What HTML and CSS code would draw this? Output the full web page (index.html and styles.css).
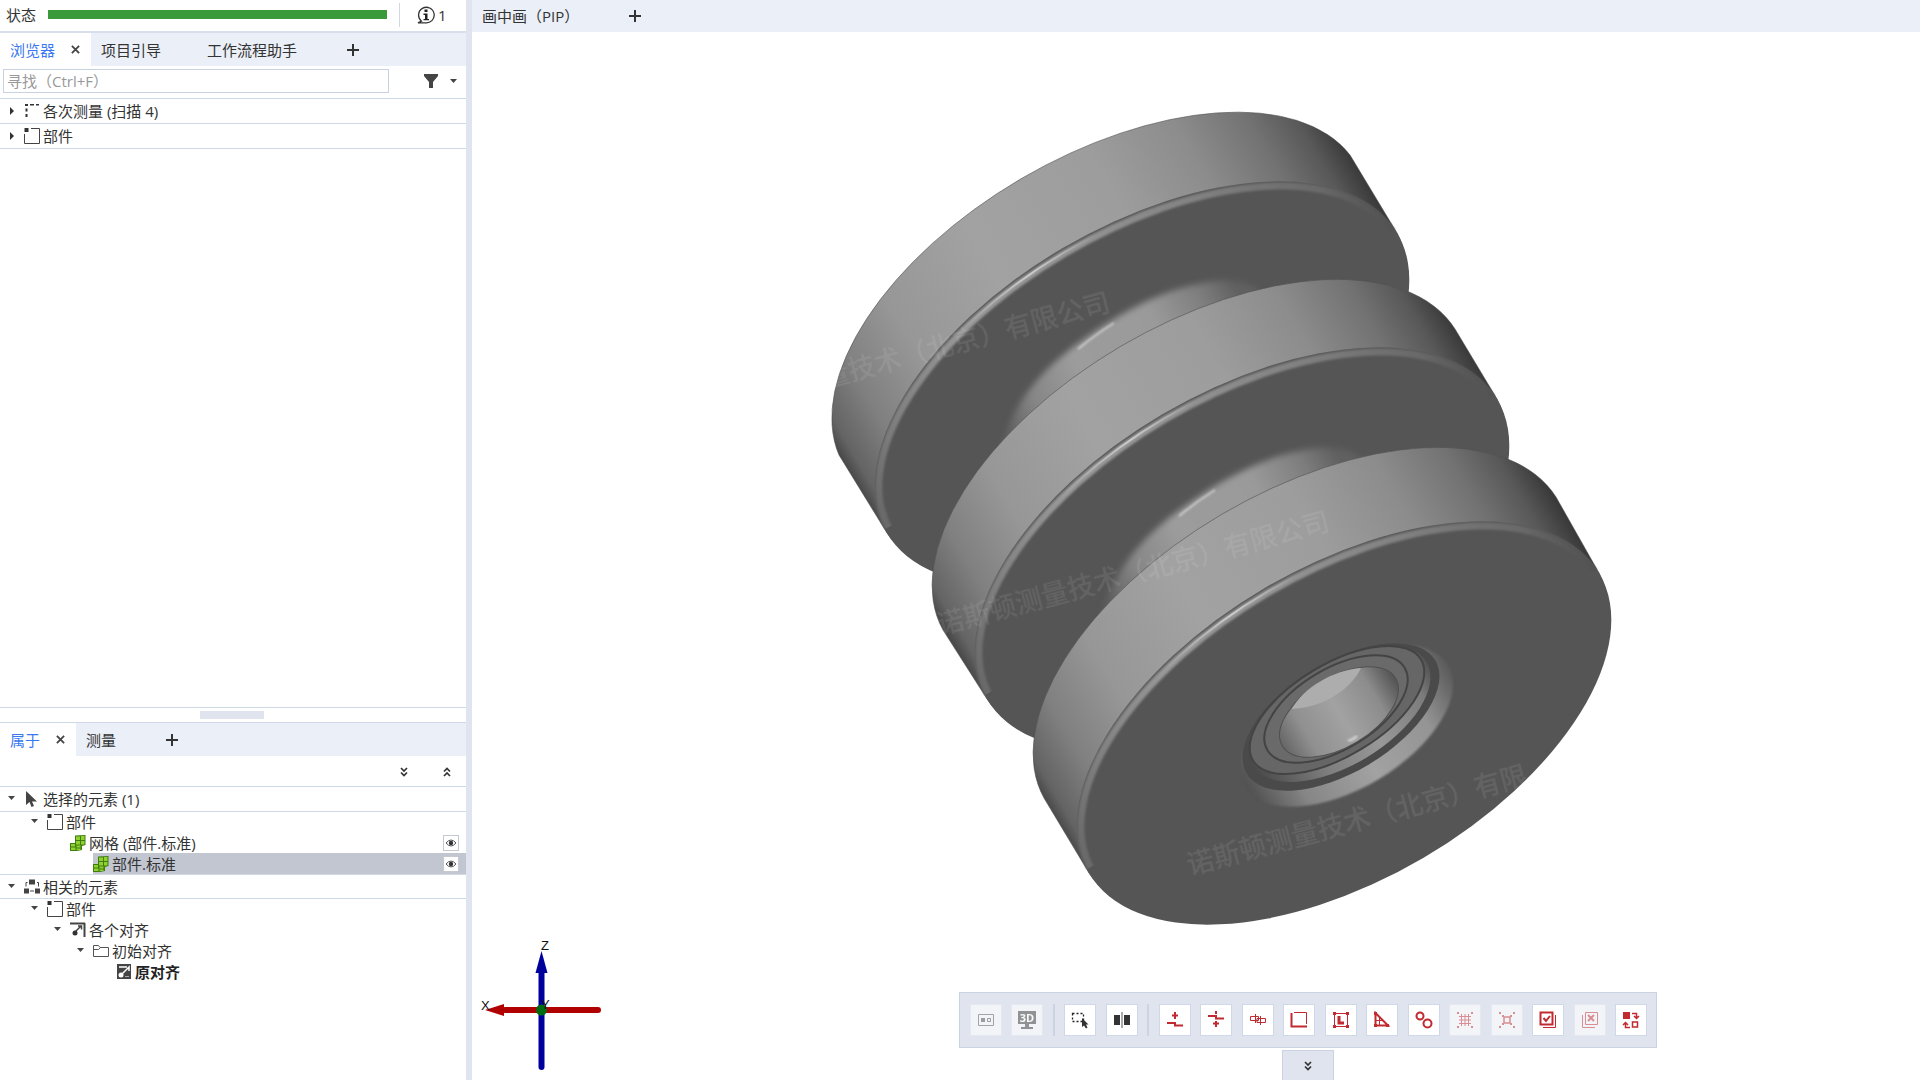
FILE: index.html
```html
<!DOCTYPE html>
<html lang="zh-CN">
<head>
<meta charset="utf-8">
<title>画中画（PIP）</title>
<link rel="stylesheet" href="styles.css">
</head>
<body>
<svg class="sprite" aria-hidden="true">
  <symbol id="i-plus" viewBox="0 0 12 12"><path d="M6 0v12M0 6h12" fill="none" stroke="#333" stroke-width="2"/></symbol>
  <symbol id="i-close" viewBox="0 0 10 10"><path d="M1 1l8 8M9 1l-8 8" fill="none" stroke="#444" stroke-width="2"/></symbol>
  <symbol id="i-right" viewBox="0 0 8 8"><path d="M2 0l4 4-4 4z" fill="#333"/></symbol>
  <symbol id="i-down" viewBox="0 0 8 8"><path d="M0 1h7L3.500 5z" fill="#444"/></symbol>
  <symbol id="i-dbl-down" viewBox="0 0 8 10"><path d="M1 1l3 3 3-3M1 5.500l3 3 3-3" fill="none" stroke="#333" stroke-width="1.700"/></symbol>
  <symbol id="i-dbl-up" viewBox="0 0 8 10"><path d="M1 4.500l3-3 3 3M1 9l3-3 3 3" fill="none" stroke="#333" stroke-width="1.700"/></symbol>
  <symbol id="i-part" viewBox="0 0 16 16"><path d="M7 .5h8.500v15H.5V6" fill="none" stroke="#444"/><path d="M.5 0h4v4h-4z" fill="#333"/></symbol>
  <symbol id="i-series" viewBox="0 0 16 16"><path d="M1 1h3v2H1zM6 1h4v1.500H6zM12 1h3v1.500h-3zM1.500 5.500h2v3h-2zM1.500 11h2v3h-2z" fill="#333"/></symbol>
  <symbol id="i-cursor" viewBox="0 0 16 16"><path d="M2 0v14l3.500-3 2 5 2.500-1-2-4.500H13z" fill="#444"/></symbol>
  <symbol id="i-mesh" viewBox="0 0 16 16"><path d="M5 .5L15.500 0v10L12 11v4l-5 1H0V8h5z" fill="#3f7d0c"/><path d="M6 1.500h4v3.500H6zM11 1h3.500v4H11zM6 6h4v3.500H6zM11 6h3.500v3.500H11zM1 9h4v2.500H1zM6.500 10.500h4v2h-4zM1 12.500h4.500V15H1zM6.500 13.500h4V15h-4z" fill="#8fd130"/></symbol>
  <symbol id="i-related" viewBox="1 1 16 15"><path d="M6 1h6v5H6zM1 10h5v5H1zM12 10h5v5h-5z" fill="#444"/><path d="M3 8V4h1.500M15.500 8V4H14M7 12.500h4" fill="none" stroke="#444"/></symbol>
  <symbol id="i-aligns" viewBox="0 0 16 16"><path d="M0 1.500h15M14.500 1v14" stroke="#444" stroke-width="2"/><path d="M5 10l6-6M8 4h3.500v3.500" fill="none" stroke="#444" stroke-width="1.500"/><circle cx="5" cy="11" r="2.500" fill="#333"/></symbol>
  <symbol id="i-folder" viewBox="0 0 16 16"><path d="M.5 13.500v-11h5l1.500 2h8.500v9zM.5 6.500h5l2-2" fill="none" stroke="#555"/></symbol>
  <symbol id="i-origin" viewBox="0 0 16 16"><path d="M1 0h14v15H1z" fill="#444"/><path d="M3 3h8M6 10l7-7v4" fill="none" stroke="#fff" stroke-width="1.500"/><circle cx="5" cy="11" r="2.500" fill="#fff"/><path d="M9 12.500h4" stroke="#aaa"/></symbol>
  <symbol id="i-eye" viewBox="0 0 16 16"><path d="M3 8q5-6 10 0-5 6-10 0z" fill="#fff" stroke="#555"/><circle cx="8" cy="8" r="2.200" fill="#333"/></symbol>
</svg>

<div class="app">
  <aside class="side">
    <div class="status">
      <label for="progress">状态</label>
      <progress id="progress" value="1" max="1"></progress>
      <button class="info" type="button">
        <svg width="18" height="18" viewBox="0 0 18 18"><path d="M4.500 15.200A7.800 7.800 0 1 1 8 16.800H1z" fill="none" stroke="#333" stroke-width="1.300"/><path d="M7.500 3.500h3v2.500h-3zM6.500 7.500h4V13H12v1.300H6.500V13H8V9H6.500z" fill="#222"/></svg>
        <span>1</span>
      </button>
    </div>

    <div class="tabs">
      <div class="tab active"><button type="button">浏览器</button><button class="close" type="button" aria-label="关闭"><svg width="9" height="9"><use href="#i-close"/></svg></button></div>
      <div class="tab"><button type="button">项目引导</button></div>
      <div class="tab"><button type="button">工作流程助手</button></div>
      <button class="add" type="button" aria-label="添加"><svg width="12" height="12"><use href="#i-plus"/></svg></button>
    </div>

    <div class="search">
      <input type="text" placeholder="寻找（Ctrl+F）" aria-label="寻找">
      <button type="button" aria-label="过滤"><svg width="34" height="16" viewBox="0 0 34 16"><path d="M0 1h14v2L9 9v6H5V9L0 3z" fill="#444"/><path d="M26 6h7l-3.500 4z" fill="#444"/></svg></button>
    </div>

    <ul class="tree browser">
      <li class="row head"><svg class="caret"><use href="#i-right"/></svg><span class="node"><svg class="icon"><use href="#i-series"/></svg>各次测量 (扫描 4)</span></li>
      <li class="row head"><svg class="caret"><use href="#i-right"/></svg><span class="node"><svg class="icon"><use href="#i-part"/></svg>部件</span></li>
    </ul>

    <div class="splitter"><span></span></div>

    <div class="tabs">
      <div class="tab active"><button type="button">属于</button><button class="close" type="button" aria-label="关闭"><svg width="9" height="9"><use href="#i-close"/></svg></button></div>
      <div class="tab"><button type="button">测量</button></div>
      <button class="add" type="button" aria-label="添加"><svg width="12" height="12"><use href="#i-plus"/></svg></button>
    </div>
    <div class="fold">
      <button type="button" aria-label="展开"><svg width="8" height="10"><use href="#i-dbl-down"/></svg></button>
      <button type="button" aria-label="折叠"><svg width="8" height="10"><use href="#i-dbl-up"/></svg></button>
    </div>

    <ul class="tree details">
      <li class="row head"><svg class="caret"><use href="#i-down"/></svg><span class="node"><svg class="icon"><use href="#i-cursor"/></svg>选择的元素 (1)</span></li>
      <li class="row l1"><svg class="caret"><use href="#i-down"/></svg><span class="node"><svg class="icon"><use href="#i-part"/></svg>部件</span></li>
      <li class="row l2"><span class="caret"></span><span class="node"><svg class="icon"><use href="#i-mesh"/></svg>网格 (部件.标准)<button class="eye" type="button" aria-label="可见"><svg width="16" height="16"><use href="#i-eye"/></svg></button></span></li>
      <li class="row l3"><span class="caret"></span><span class="node selected"><svg class="icon"><use href="#i-mesh"/></svg>部件.标准<button class="eye" type="button" aria-label="可见"><svg width="16" height="16"><use href="#i-eye"/></svg></button></span></li>
      <li class="row head ruled"><svg class="caret"><use href="#i-down"/></svg><span class="node"><svg class="icon"><use href="#i-related"/></svg>相关的元素</span></li>
      <li class="row l1"><svg class="caret"><use href="#i-down"/></svg><span class="node"><svg class="icon"><use href="#i-part"/></svg>部件</span></li>
      <li class="row l2"><svg class="caret"><use href="#i-down"/></svg><span class="node"><svg class="icon"><use href="#i-aligns"/></svg>各个对齐</span></li>
      <li class="row l3"><svg class="caret"><use href="#i-down"/></svg><span class="node"><svg class="icon"><use href="#i-folder"/></svg>初始对齐</span></li>
      <li class="row l4"><span class="caret"></span><span class="node bold"><svg class="icon"><use href="#i-origin"/></svg>原对齐</span></li>
    </ul>
  </aside>

  <main class="view">
    <div class="tabs viewtabs">
      <div class="tab"><button type="button">画中画（PIP）</button></div>
      <button class="add" type="button" aria-label="添加"><svg width="12" height="12"><use href="#i-plus"/></svg></button>
    </div>
    <div class="canvas">
      <svg class="scene" viewBox="472 32 1448 1048">
        <defs>
          <linearGradient id="side" gradientUnits="userSpaceOnUse" x1="-256" y1="150" x2="256" y2="-150">
            <stop offset="0" stop-color="#4a4a4a"/><stop offset=".02" stop-color="#646464"/><stop offset=".09" stop-color="#808080"/><stop offset=".2" stop-color="#979797"/><stop offset=".38" stop-color="#a2a2a2"/><stop offset=".62" stop-color="#9d9d9d"/><stop offset=".77" stop-color="#8c8c8c"/><stop offset=".88" stop-color="#727272"/><stop offset=".95" stop-color="#585858"/><stop offset="1" stop-color="#383838"/>
          </linearGradient>
          <linearGradient id="rim" gradientUnits="userSpaceOnUse" x1="-297" y1="0" x2="297" y2="0">
            <stop offset="0" stop-color="#686868"/><stop offset=".1" stop-color="#7e7e7e"/><stop offset=".3" stop-color="#9a9a9a"/><stop offset=".5" stop-color="#969696"/><stop offset=".75" stop-color="#808080"/><stop offset=".92" stop-color="#6a6a6a"/><stop offset="1" stop-color="#505050"/>
          </linearGradient>
          <linearGradient id="shine" gradientUnits="userSpaceOnUse" x1="-297" y1="0" x2="297" y2="0">
            <stop offset=".28" stop-color="#fff" stop-opacity="0"/><stop offset=".43" stop-color="#fff" stop-opacity=".5"/><stop offset=".56" stop-color="#fff" stop-opacity="0"/>
          </linearGradient>
          <linearGradient id="neck" gradientUnits="userSpaceOnUse" x1="1005" y1="430" x2="1240" y2="295">
            <stop offset="0" stop-color="#606060"/><stop offset=".15" stop-color="#868686"/><stop offset=".35" stop-color="#9c9c9c"/><stop offset=".68" stop-color="#9a9a9a"/><stop offset=".87" stop-color="#7e7e7e"/><stop offset="1" stop-color="#606060"/>
          </linearGradient>
          <linearGradient id="seat" gradientUnits="userSpaceOnUse" x1="-118" y1="0" x2="118" y2="0">
            <stop offset="0" stop-color="#505050"/><stop offset=".2" stop-color="#868686"/><stop offset=".5" stop-color="#a2a2a2"/><stop offset=".8" stop-color="#949494"/><stop offset="1" stop-color="#5a5a5a"/>
          </linearGradient>
          <linearGradient id="step" gradientUnits="userSpaceOnUse" x1="-100" y1="0" x2="100" y2="0">
            <stop offset="0" stop-color="#4c4c4c"/><stop offset=".3" stop-color="#7e7e7e"/><stop offset=".6" stop-color="#989898"/><stop offset=".9" stop-color="#7c7c7c"/><stop offset="1" stop-color="#555"/>
          </linearGradient>
          <linearGradient id="bore" gradientUnits="userSpaceOnUse" x1="-65" y1="0" x2="65" y2="0">
            <stop offset="0" stop-color="#686868"/><stop offset=".2" stop-color="#909090"/><stop offset=".5" stop-color="#a2a2a2"/><stop offset=".8" stop-color="#8c8c8c"/><stop offset="1" stop-color="#555"/>
          </linearGradient>
          <filter id="soft"><feGaussianBlur stdDeviation="3"/></filter>
          <filter id="fine" x="-10%" y="-10%" width="120%" height="120%"><feGaussianBlur stdDeviation="1"/></filter>
          <clipPath id="upper"><path d="M-320-180H320V-4H-320z"/></clipPath>
          <g id="face" transform="rotate(-30.400)">
            <ellipse rx="296" ry="156.500" fill="#555"/>
            <g clip-path="url(#upper)">
              <ellipse rx="292" ry="151" fill="none" stroke="url(#rim)" stroke-width="7" filter="url(#fine)"/>
              <ellipse rx="293" ry="152" fill="none" stroke="url(#shine)" stroke-width="2"/>
            </g>
          </g>
          <g id="collar">
            <path d="M1002 447C1012 405 1038 374 1073 347 1118 313 1165 287 1215 281 1236 279 1252 284 1262 292L1180 340 1040 450Z" fill="url(#neck)" filter="url(#soft)"/>
            <path d="M1078 349Q1096 334 1114 323" fill="none" stroke="#fff" stroke-width="2" opacity=".55" filter="url(#fine)"/>
          </g>
        </defs>

        <g transform="translate(1142 383)">
          <path d="M255-150A296 156.500-30.400 0 1-255 150L-303 72A297 157-30.400 0 1 208-228Z" fill="url(#side)" stroke="#505050" stroke-opacity=".6"/>
          <use href="#face"/>
        </g>
        <use href="#collar"/>
        <g transform="translate(1242 549)">
          <path d="M255-150A296 156.500-30.400 0 1-255 150L-299 81A297 157-30.400 0 1 213-220Z" fill="url(#side)" stroke="#505050" stroke-opacity=".6"/>
          <use href="#face"/>
        </g>
        <use href="#collar" transform="translate(101 167)"/>
        <g transform="translate(1344 723)">
          <path d="M255-150A296 156.500-30.400 0 1-255 150L-300 75A297 157-30.400 0 1 212-226Z" fill="url(#side)" stroke="#505050" stroke-opacity=".6"/>
          <use href="#face"/>
        </g>

        <g transform="translate(1347 726) rotate(-31)"><ellipse rx="118" ry="62" fill="url(#seat)" filter="url(#fine)"/></g>
        <g transform="translate(1341 717) rotate(-31)"><ellipse rx="110" ry="55" fill="#4a4a4a"/></g>
        <g transform="translate(1340 714) rotate(-31)"><ellipse rx="101" ry="51" fill="url(#step)"/></g>
        <g transform="translate(1337 710) rotate(-31)"><ellipse rx="98" ry="46" fill="#666" stroke="#444" stroke-width="2"/></g>
        <g transform="translate(1336 709) rotate(-31)"><ellipse rx="80" ry="40" fill="#6a6a6a" stroke="#444" stroke-width="2"/></g>
        <g transform="translate(1339 712)"><ellipse rx="66" ry="35" transform="rotate(-31)" fill="url(#bore)" stroke="#505050"/><path d="M-47-3C-36-24-6-42 22-44 12-22-18-4-47-3z" fill="#adadad"/><path d="M9 29q5-1 9-5" fill="none" stroke="#ddd" stroke-width="2" filter="url(#fine)"/></g>

        <g class="watermark">
          <text transform="translate(825 388) rotate(-15)">量技术（北京）有限公司</text>
          <text transform="translate(940 635) rotate(-15)">诺斯顿测量技术（北京）有限公司</text>
          <text transform="translate(1190 875) rotate(-15)">诺斯顿测量技术（北京）有限</text>
        </g>

        <g class="axes">
          <path d="M505 1010h93" stroke="#b00000" stroke-width="6" stroke-linecap="round"/>
          <path d="M485 1010l19-6v12z" fill="#b00000"/>
          <path d="M541.500 1067v-95" stroke="#00009c" stroke-width="6" stroke-linecap="round"/>
          <path d="M541.500 951l-6 22h12z" fill="#00009c"/>
          <circle cx="541.500" cy="1010" r="5.500" fill="#006c10"/>
          <text x="481" y="1010">X</text><text x="541" y="950">Z</text><text x="541" y="1009">Y</text>
        </g>
      </svg>

      <div class="dock">
        <div class="toolbar">
          <button type="button" disabled aria-label="视图"><svg viewBox="0 0 30 30"><path d="M7.500 9.500h15v11h-15z" fill="none" stroke="#555"/><path d="M10 13h4v4h-4z" fill="#444"/><path d="M16.500 13.500h3v3h-3z" fill="none" stroke="#444"/></svg></button>
          <button type="button" disabled aria-label="3D"><svg viewBox="0 0 30 30"><path d="M6 6h18v13h-7v3h4v2H9v-2h4v-3H6z" fill="#333"/><text x="15" y="17" text-anchor="middle" class="threed">3D</text></svg></button>
          <span class="sep"></span>
          <button type="button" aria-label="选择"><svg viewBox="0 0 30 30"><path d="M7.500 8.500h11v8h-11z" fill="none" stroke="#222" stroke-dasharray="2 2" stroke-width="1.300"/><path d="M17 13v9l2-1.500 2 3 1.500-1-1.500-3h2.500z" fill="#333"/></svg></button>
          <button type="button" aria-label="对称"><svg viewBox="0 0 30 30"><path d="M7 10h6v10H7zM17 10h6v10h-6z" fill="#333"/><path d="M15 7v16" stroke="#555"/></svg></button>
          <span class="sep"></span>
          <button type="button" aria-label="检查点"><svg viewBox="0 0 30 30"><path d="M7 18h8v2.500h8" class="r2"/><path d="M15 7v7M12 10.500h6" class="r2"/></svg></button>
          <button type="button" aria-label="偏差"><svg viewBox="0 0 30 30"><path d="M7 11h8v2.500h8M15 6v3M15 16v6M12 18.500h6" class="r2"/></svg></button>
          <button type="button" aria-label="剖面"><svg viewBox="0 0 30 30"><path d="M7.500 11.500h8v4h-8zM14 13.500h8.500v4H14zM12.500 9v9M17.500 11v9" class="r1"/></svg></button>
          <button type="button" aria-label="区域"><svg viewBox="0 0 30 30"><path d="M7.500 8v13.500H23" class="r2"/><path d="M10 7.500h12.500V19" class="r1"/></svg></button>
          <button type="button" aria-label="长度"><svg viewBox="0 0 30 30"><path d="M8.500 8.500h13v13h-13z" class="r1"/><path d="M13 11v7h5" class="r3"/><path d="M7 7h3v3H7zM20 7h3v3h-3zM7 20h3v3H7zM20 20h3v3h-3z" class="rf"/></svg></button>
          <button type="button" aria-label="角度"><svg viewBox="0 0 30 30"><path d="M8.500 8v12.500H21z" class="r2"/><path d="M8.500 15.500h7M12.500 12v8" class="r1"/><path d="M7 7h3v3H7zM7 19h3v3H7zM19 19h3v3h-3z" class="rf"/></svg></button>
          <button type="button" aria-label="圆"><svg viewBox="0 0 30 30"><circle cx="11" cy="11" r="3.500" class="r2"/><circle cx="18.500" cy="18.500" r="4" class="r2"/></svg></button>
          <button type="button" disabled aria-label="网格"><svg viewBox="0 0 30 30"><path d="M9 11.500h12M9 15h12M9 18.500h12M11.500 9v12M15 9v12M18.500 9v12" class="r1"/><path d="M7 7h2v2H7zM21 7h2v2h-2zM7 21h2v2H7zM21 21h2v2h-2z" class="rf"/></svg></button>
          <button type="button" disabled aria-label="节点"><svg viewBox="0 0 30 30"><path d="M12 12h6v6h-6z" class="r15"/><path d="M7 7h2v2H7zM21 7h2v2h-2zM7 21h2v2H7zM21 21h2v2h-2zM10 10h2v2h-2zM18 10h2v2h-2zM10 18h2v2h-2zM18 18h2v2h-2z" class="rf"/></svg></button>
          <button type="button" aria-label="全选"><svg viewBox="0 0 30 30"><path d="M7.500 7.500h12v12h-12z" class="r2"/><path d="M10 22.500h12.500V10" class="r1"/><path d="M10.500 13l2.500 3 4-5" class="r2"/></svg></button>
          <button type="button" disabled aria-label="取消选择"><svg viewBox="0 0 30 30"><path d="M10.500 7.500h12v12h-12z" class="r1"/><path d="M7.500 10v12.500H20" class="r1"/><path d="M13 10l6 6M19 10l-6 6" class="r2"/></svg></button>
          <button type="button" aria-label="反选"><svg viewBox="0 0 30 30"><path d="M7 7h7v7H7z" class="rf"/><path d="M16.500 17h5v5h-5zM16 8.500h4.500V13M18 11l2.500 2.500L23 11M14 22.500H9.500V18M7 20l2.500-2.500L12 20" class="r15"/></svg></button>
        </div>
        <button class="drawer" type="button" aria-label="更多"><svg width="8" height="10"><use href="#i-dbl-down"/></svg></button>
      </div>
    </div>
  </main>
</div>
</body>
</html>
```
FILE: styles.css
```css
* { box-sizing: border-box; }

body {
  margin: 0;
  font: 15px/20px "Open Sans", "Noto Sans CJK SC", sans-serif;
  color: #333;
  background: #fff;
}

button {
  margin: 0;
  padding: 0;
  border: 0;
  background: none;
  font: inherit;
  color: inherit;
}

svg { display: block; }
.sprite { position: absolute; width: 0; height: 0; }

.app {
  display: grid;
  grid-template-columns: 472px 1fr;
  height: 100vh;
}

.side {
  display: flex;
  flex-direction: column;
  min-height: 0;
  border-right: 6px solid #dfe4ef;
}

.status {
  display: flex;
  align-items: center;
  height: 33px;
  padding: 0 0 2px 6px;
  border-bottom: 2px solid #d9dfea;
}
.status label { width: 42px; }
progress {
  width: 339px;
  height: 9px;
  border: 0;
  appearance: none;
  background: #3a9a3a;
}
progress::-webkit-progress-bar { background: #3a9a3a; }
progress::-webkit-progress-value { background: #3a9a3a; }
.info {
  display: flex;
  align-items: center;
  gap: 3px;
  height: 24px;
  margin-left: 12px;
  padding-left: 17px;
  border-left: 1px solid #d0d8e4;
}

.tabs {
  display: flex;
  flex: none;
  height: 33px;
  background: #ebeff7;
}
.tab {
  display: flex;
  align-items: center;
  padding: 0 36px 0 10px;
}
.tab.active {
  padding-right: 11px;
  background: #fff;
  color: #3a78f2;
}
.close { padding: 0 0 0 16px; }
.add {
  display: grid;
  place-items: center;
  width: 40px;
}

.search {
  display: flex;
  align-items: center;
  justify-content: space-between;
  height: 33px;
  padding: 0 8px 2px 3px;
  border-bottom: 1px solid #d0dae6;
}
.search input {
  width: 386px;
  height: 24px;
  padding: 0 3px;
  border: 1px solid #c8d2e0;
  font: inherit;
  color: #333;
  outline: 0;
}
.search input::placeholder { color: #999; opacity: 1; }

.tree {
  margin: 0;
  padding: 0;
  list-style: none;
}
.browser { flex: 1; }
.details { height: 293px; }
.row {
  display: flex;
  align-items: center;
  height: 21px;
  padding-left: 8px;
}
.row.head { height: 25px; border-bottom: 1px solid #d0dae6; }
.row.ruled { border-top: 1px solid #d0dae6; }
.row.l1 { height: 20px; padding-left: 31px; }
.l2 { padding-left: 54px; }
.l3 { padding-left: 77px; }
.l4 { padding-left: 100px; }
.caret { flex: none; width: 8px; height: 8px; margin-right: 8px; }
.icon { flex: none; width: 16px; height: 16px; margin-right: 3px; }
.node {
  display: flex;
  flex: 1;
  align-items: center;
  height: 100%;
}
.selected { background: #c2c6d0; }
.bold { font-weight: 700; color: #222; }
.eye {
  margin: 0 7px 0 auto;
  background: #fff;
  outline: 1px solid #c4c8d0;
  outline-offset: -1px;
}

.splitter {
  display: flex;
  align-items: center;
  height: 16px;
  padding-left: 200px;
  border: solid #d0dae6;
  border-width: 1px 0;
}
.splitter span { width: 64px; height: 8px; background: #dfe4ef; }

.fold {
  display: flex;
  align-items: center;
  justify-content: flex-end;
  gap: 35px;
  height: 31px;
  padding: 2px 15px 0 0;
  border-bottom: 1px solid #d0dae6;
}

.view {
  display: flex;
  flex-direction: column;
  min-width: 0;
  min-height: 0;
}
.viewtabs { height: 32px; }
.canvas {
  position: relative;
  flex: 1;
  min-height: 0;
}
.scene { width: 100%; height: 100%; }
.watermark {
  font: 500 27px "Noto Sans CJK SC", sans-serif;
  fill: #fff;
  opacity: .09;
}
.axes { font: 13px "Liberation Sans", sans-serif; fill: #111; }

.dock {
  position: absolute;
  right: 263px;
  bottom: 0;
  display: flex;
  flex-direction: column;
  align-items: center;
  gap: 2px;
}
.toolbar {
  display: flex;
  align-items: center;
  justify-content: space-between;
  width: 698px;
  height: 56px;
  padding: 0 10px 0 11px;
  border: 1px solid #cad3e2;
  background: #e0e4ee;
}
.toolbar button {
  width: 30px;
  height: 30px;
  background: #fff;
  outline: 1px solid #cfd8e6;
}
.toolbar button:disabled { background: #f2f4f8; outline-color: #e4e8f0; }
.toolbar button:disabled svg { opacity: .5; }
.sep { width: 2px; height: 32px; margin: 0 -1px; background: #cdd3e0; }
.r1, .r15, .r2, .r3 { fill: none; stroke: #c02a30; }
.r15 { stroke-width: 1.5px; }
.r2 { stroke-width: 2px; }
.r3 { stroke-width: 3px; }
.rf { fill: #c02a30; }
.threed { font: 700 11px "Open Sans", sans-serif; fill: #fff; }
.drawer {
  display: grid;
  place-items: center;
  width: 52px;
  height: 30px;
  border: 1px solid #cad3e2;
  border-bottom: 0;
  background: #e0e4ee;
}
```
